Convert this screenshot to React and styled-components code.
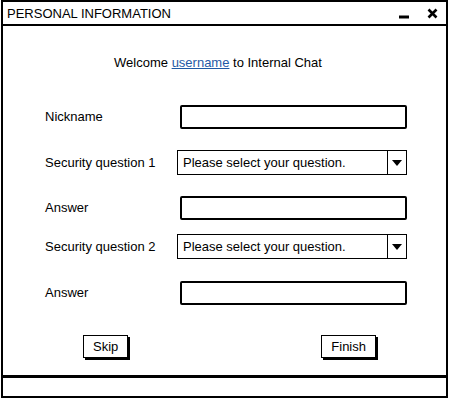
import React from "react";
import styled, { createGlobalStyle } from "styled-components";

const Global = createGlobalStyle`
  html, body { margin: 0; padding: 0; background: #fff; }
  body { font-family: "Liberation Sans", Arial, sans-serif; color: #000; }
`;

const Window = styled.div`
  box-sizing: border-box;
  margin: 0 0 0 1px;
  width: 447px;
  height: 398px;
  border: 2px solid #000;
  display: flex;
  flex-direction: column;
  background: #fff;
`;

const TitleBar = styled.div`
  height: 22px;
  border-bottom: 2px solid #000;
  display: flex;
  align-items: center;
  padding: 0 8px 0 4px;
  font-size: 13px;
`;

const Title = styled.span`
  flex: 1;
`;

const WinButtons = styled.div`
  display: flex;
  align-items: center;
  gap: 17px;
`;

const Content = styled.div`
  flex: 1;
  display: flex;
  flex-direction: column;
  padding: 0 39px 0 42px;
  font-size: 13px;
`;

const Welcome = styled.div`
  margin-top: 29px;
  line-height: 16px;
  text-align: center;
  padding-right: 16px;
`;

const Link = styled.a`
  color: #1f5aa6;
  text-decoration: underline;
`;

const Row = styled.div`
  display: grid;
  grid-template-columns: 132px 1fr;
  align-items: center;
  height: 25px;
  margin-top: ${(p) => p.$gap}px;
`;

const Label = styled.span`
  font-size: 13px;
`;

const TextBox = styled.div`
  box-sizing: border-box;
  margin-left: 3px;
  height: 24px;
  border: 2px solid #000;
  border-radius: 2px;
  background: #fff;
`;

const Select = styled.div`
  box-sizing: border-box;
  height: 25px;
  border: 1.5px solid #000;
  display: flex;
  align-items: center;
  background: #fff;
`;

const SelectText = styled.span`
  flex: 1;
  padding-left: 5px;
`;

const Arrow = styled.div`
  width: 18px;
  height: 100%;
  border-left: 1.5px solid #000;
  display: flex;
  align-items: center;
  justify-content: center;
`;

const ButtonRow = styled.div`
  display: flex;
  justify-content: space-between;
  margin-top: 30px;
  padding: 0 31px 0 38px;
`;

const Button = styled.div`
  box-sizing: border-box;
  height: 23px;
  padding: 0 9px;
  border: 1.5px solid #000;
  box-shadow: 2px 2px 0 #000;
  display: flex;
  align-items: center;
  font-size: 13px;
  background: #fff;
`;

const StatusBar = styled.div`
  height: 18px;
  border-top: 3px solid #000;
`;

const Triangle = () => (
  <svg width="10" height="6" viewBox="0 0 10 6">
    <path d="M0 0 L10 0 L5 6 Z" fill="#000" />
  </svg>
);

const Dropdown = () => (
  <Select>
    <SelectText>Please select your question.</SelectText>
    <Arrow>
      <Triangle />
    </Arrow>
  </Select>
);

export default function App() {
  return (
    <>
      <Global />
      <Window>
        <TitleBar>
          <Title>PERSONAL INFORMATION</Title>
          <WinButtons>
            <svg width="12" height="12" viewBox="0 0 12 12">
              <path d="M1 10 L11 10" stroke="#000" strokeWidth="3" />
            </svg>
            <svg width="11" height="11" viewBox="0 0 11 11">
              <path d="M1.5 1.5 L9.5 9.5 M9.5 1.5 L1.5 9.5" stroke="#000" strokeWidth="2.6" />
            </svg>
          </WinButtons>
        </TitleBar>
        <Content>
          <Welcome>
            Welcome <Link>username</Link> to Internal Chat
          </Welcome>
          <Row $gap={33}>
            <Label>Nickname</Label>
            <TextBox />
          </Row>
          <Row $gap={21}>
            <Label>Security question 1</Label>
            <Dropdown />
          </Row>
          <Row $gap={20}>
            <Label>Answer</Label>
            <TextBox />
          </Row>
          <Row $gap={14}>
            <Label>Security question 2</Label>
            <Dropdown />
          </Row>
          <Row $gap={21}>
            <Label>Answer</Label>
            <TextBox />
          </Row>
          <ButtonRow>
            <Button>Skip</Button>
            <Button>Finish</Button>
          </ButtonRow>
        </Content>
        <StatusBar />
      </Window>
    </>
  );
}
